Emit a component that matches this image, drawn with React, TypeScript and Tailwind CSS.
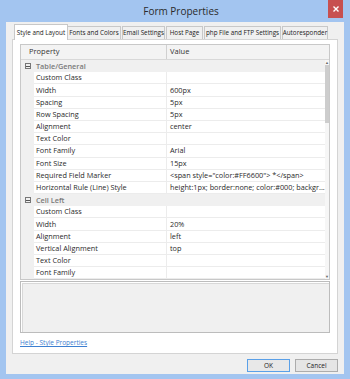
import React from "react";

type Row = { name: string; value?: string; category?: boolean };

const rows: Row[] = [
  { name: "Table/General", category: true },
  { name: "Custom Class" },
  { name: "Width", value: "600px" },
  { name: "Spacing", value: "5px" },
  { name: "Row Spacing", value: "5px" },
  { name: "Alignment", value: "center" },
  { name: "Text Color" },
  { name: "Font Family", value: "Arial" },
  { name: "Font Size", value: "15px" },
  { name: "Required Field Marker", value: '<span style="color:#FF6600"> *</span>' },
  { name: "Horizontal Rule (Line) Style", value: "height:1px; border:none; color:#000; backgr..." },
  { name: "Cell Left", category: true },
  { name: "Custom Class" },
  { name: "Width", value: "20%" },
  { name: "Alignment", value: "left" },
  { name: "Vertical Alignment", value: "top" },
  { name: "Text Color" },
  { name: "Font Family" },
];

const tabs = [
  { label: "Style and Layout", w: "w-[54px]" },
  { label: "Fonts and Colors", w: "w-[54px]" },
  { label: "Email Settings", w: "w-[43px]" },
  { label: "Host Page", w: "w-[37px]" },
  { label: "php File and FTP Settings", w: "w-[77px]" },
  { label: "Autoresponder", w: "w-[46px]" },
];

const App = () => {
  return (
    <div
      className="w-[350px] h-[379px] bg-[#a3c5f0] flex flex-col overflow-hidden"
      style={{ fontFamily: "'Open Sans', 'Noto Sans', sans-serif" }}
    >
      {/* TITLE BAR */}
      <div className="h-[22px] flex items-start relative shrink-0">
        <div className="flex-1 text-center text-[10px] leading-[22px] text-[#2b2b2b] pl-[12px]">
          Form Properties
        </div>
        <div className="absolute right-[7px] top-0 w-[15px] h-[18px] bg-[#c75050] flex items-center justify-center">
          <svg width="6" height="6" viewBox="0 0 6 6">
            <path d="M0.5 0.5 L5.5 5.5 M5.5 0.5 L0.5 5.5" stroke="#fff" strokeWidth="1.4" />
          </svg>
        </div>
      </div>

      {/* BODY */}
      <div className="flex-1 mx-[6px] mb-[5px] bg-[#f0f0f0] flex flex-col px-[6px]">
        {/* TABS */}
        <div className="flex items-end h-[16px] mt-[1px] pl-[2px]">
          {tabs.map((t, i) => (
            <div
              key={t.label}
              className={`${t.w} shrink-0 flex items-center justify-center text-[6.3px] whitespace-nowrap border border-[#c8c8c8] border-b-0 text-[#222] ${
                i === 0
                  ? "h-[16px] bg-white -mb-px relative z-10 -mr-px"
                  : "h-[13px] bg-[#f0f0f0] mr-[1px]"
              }`}
            >
              {t.label}
            </div>
          ))}
        </div>

        {/* PANEL */}
        <div className="h-[315px] bg-white border border-[#d4d4d4] flex flex-col px-[7px] pt-[4px]">
          {/* GRID */}
          <div className="border border-[#c8c8c8] flex flex-col">
            <div className="h-[15px] flex bg-[#f3f3f3] border-b border-[#d8d8d8] text-[7.5px] text-[#333]">
              <div className="w-[146px] border-r border-[#d0d0d0] flex items-center pl-[8px]">Property</div>
              <div className="flex-1 flex items-center pl-[3px]">Value</div>
            </div>
            <div className="flex">
              <div className="flex-1 flex flex-col">
                {rows.map((r, i) =>
                  r.category ? (
                    <div key={i} className="h-[12.2px] flex bg-[#f0f0f0] text-[7.3px] text-[#7a7a7a] font-semibold">
                      <div className="w-[13px] flex items-center justify-center">
                        <div className="w-[6px] h-[6px] border border-[#777] flex items-center justify-center">
                          <div className="w-[4px] h-px bg-[#555]" />
                        </div>
                      </div>
                      <div className="flex items-center pl-[2px]">{r.name}</div>
                    </div>
                  ) : (
                    <div key={i} className="h-[12.2px] flex text-[7.3px] text-[#2a2a2a]">
                      <div className="w-[13px] bg-[#f0f0f0]" />
                      <div className="w-[133px] flex items-center pl-[2px] border-b border-r border-[#ececec] whitespace-nowrap overflow-hidden">
                        {r.name}
                      </div>
                      <div className="flex-1 flex items-center pl-[3px] border-b border-[#ececec] whitespace-nowrap overflow-hidden">
                        {r.value}
                      </div>
                    </div>
                  )
                )}
              </div>
              {/* SCROLLBAR */}
              <div className="w-[6px] bg-[#f6f6f6] flex flex-col items-center">
                <div className="text-[4px] leading-[5px] text-[#666]">▲</div>
                <div className="w-[4px] h-[58px] bg-[#cdcdcd]" />
                <div className="flex-1" />
                <div className="text-[4px] leading-[5px] text-[#666]">▼</div>
              </div>
            </div>
          </div>

          {/* DESCRIPTION */}
          <div className="h-[52px] mt-[1px] bg-[#f0f0f0] border border-[#bcbcbc] shadow-[inset_1px_1px_0_#fff,inset_2px_2px_0_#d8d8d8]" />

          {/* HELP */}
          <div className="mt-[5px] text-[6.5px] text-[#3d7fd0] underline">Help - Style Properties</div>
        </div>

        {/* BUTTONS */}
        <div className="flex justify-end gap-[5px] mt-[5px]">
          <button className="w-[43px] h-[13px] border border-[#5aa0e8] bg-[#e8e8e8] text-[6.5px] text-[#222] flex items-center justify-center">
            OK
          </button>
          <button className="w-[43px] h-[13px] border border-[#acacac] bg-[#e5e5e5] text-[6.5px] text-[#222] flex items-center justify-center">
            Cancel
          </button>
        </div>
      </div>
    </div>
  );
};

export default App;
